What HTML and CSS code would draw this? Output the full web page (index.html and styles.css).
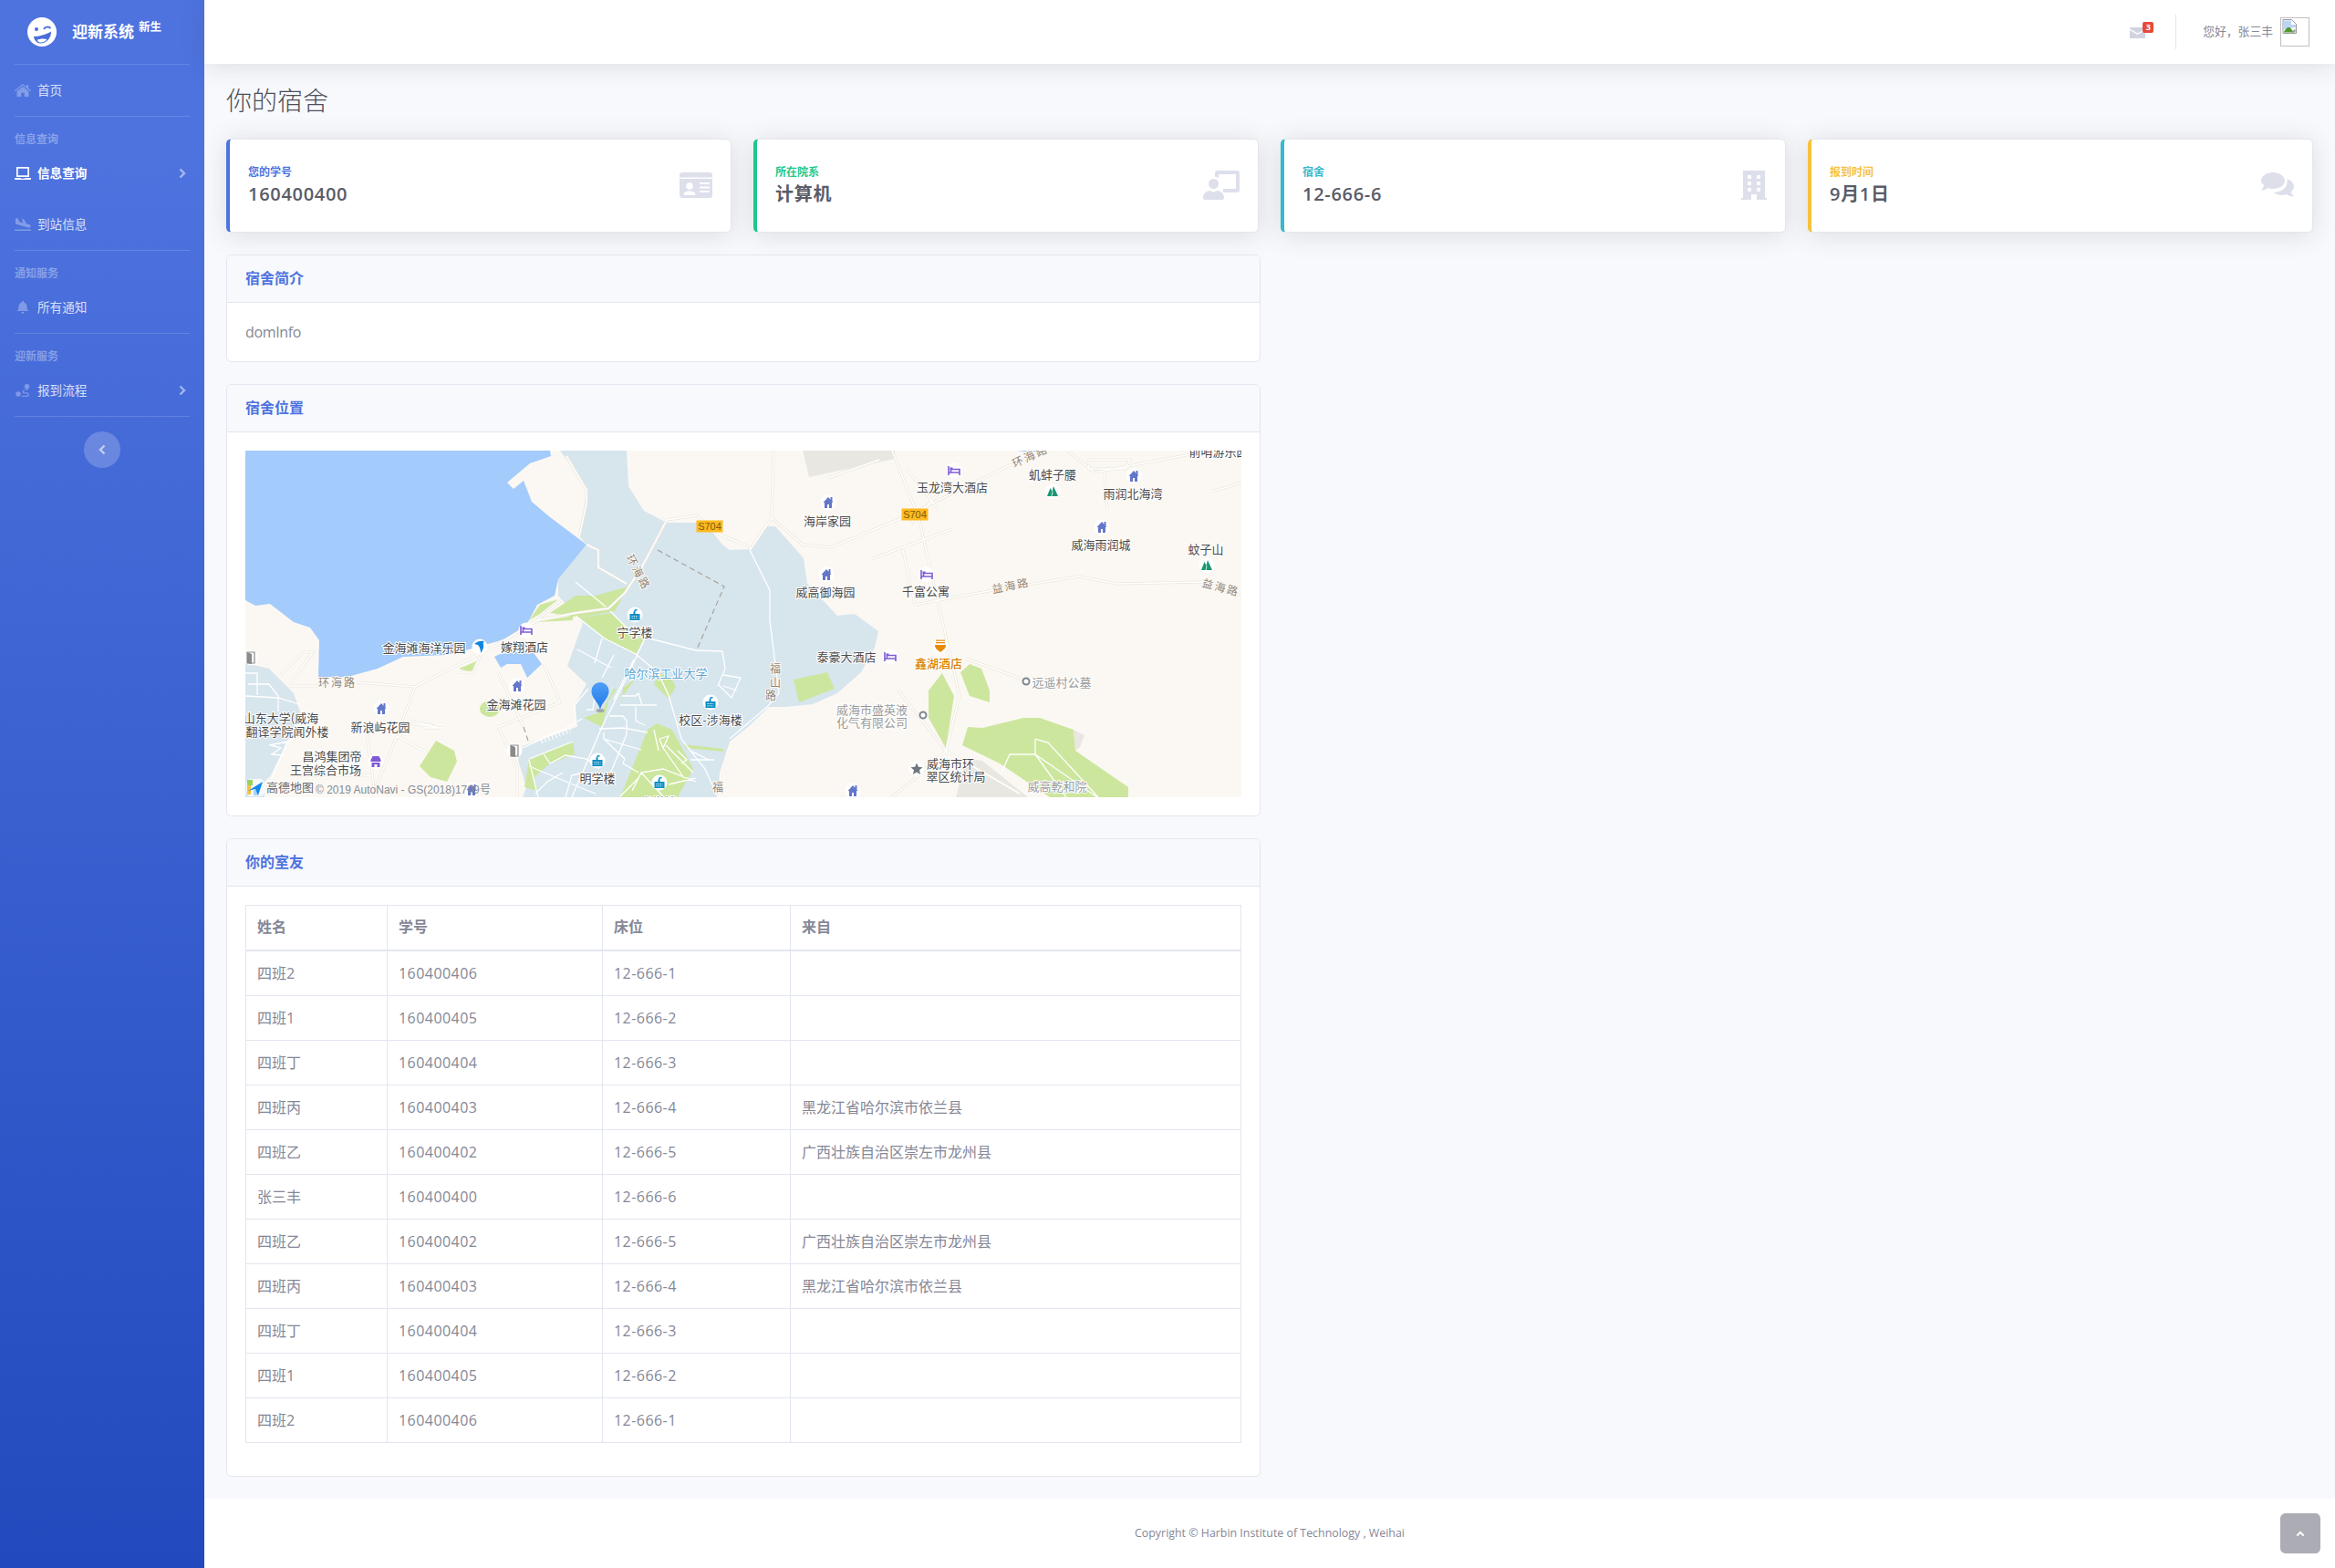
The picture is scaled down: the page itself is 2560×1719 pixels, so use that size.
FILE: index.html
```html
<!DOCTYPE html>
<html lang="zh-CN">
<head>
<meta charset="utf-8">
<title>你的宿舍</title>
<link rel="stylesheet" href="styles.css">
</head>
<body>
<svg class="defs" width="0" height="0" aria-hidden="true">
  <defs>
    <linearGradient id="pin-fill" x1="0" y1="0" x2="0" y2="1"><stop offset="0" stop-color="#4f9ff6"/><stop offset="1" stop-color="#1f78e6"/></linearGradient>
    <g id="m-bed"><circle r="8.5" fill="#fff"/><path d="M-6-5V5M-6 2H6V5M6 2V-1.5H-3.5V2" fill="none" stroke="#7f5bd5" stroke-width="1.6"/><rect x="-4.5" y="-3.5" width="3" height="2" fill="#7f5bd5"/></g>
    <g id="m-house"><circle r="8.5" fill="#fff"/><path d="M-5.5 0L0-6 2.5-3.3V-6H4.5V-1L5.5 0H4V6H1V2H-1V6H-4V0Z" fill="#6477c8"/></g>
    <g id="m-campus"><circle r="8.5" fill="#fff"/><path d="M-5.5 6V-1H-1.5V-3L0-6H2.5V-4.5H.5V-1H5.5V6Z" fill="#0a8fc4"/><path d="M-3.5 1.5H3.5M-3.5 3.8H3.5" stroke="#fff" stroke-width="1" stroke-dasharray="1.2 1"/></g>
    <g id="m-market"><circle r="8.5" fill="#fff"/><path d="M-3.5-6H3.5L5.5-2V0H-5.5V-2ZM-4.5 1H4.5V6H1.5V3H-1.5V6H-4.5Z" fill="#7f5bd5"/></g>
    <g id="m-dolphin"><circle r="8.5" fill="#fff"/><path d="M-6-3C-3-6 2-7 5-6L3.5-4C5-1 4 3 1 7 1 3 0 0-2-2-3-2.500-5-2.500-6-3Z" fill="#0a84e0"/></g>
    <g id="m-door"><circle r="8.5" fill="#fff"/><path d="M-4-6H4V6H-4Z" fill="none" stroke="#8a8a8a" stroke-width="1.200"/><path d="M-4-6L1-4V7L-4 6Z" fill="#8a8a8a"/></g>
    <g id="m-hill"><circle r="8.5" fill="#fff"/><path d="M-6 5L-2.500-4-.5 0 1-6 6 5Z" fill="#1a9670"/><path d="M-1 5L0 0" stroke="#fff" stroke-width=".8"/></g>
    <g id="m-bowl"><circle r="8.500" fill="#fff"/><path d="M-6-1H6C6 3 3 5 1.500 5.500V6.500H-1.500V5.500C-3 5-6 3-6-1ZM-5-6.500H5V-5.300H-5ZM-5-4H5V-2.800H-5Z" fill="#e88a00"/></g>
    <g id="m-ring"><circle r="3.500" fill="#fff" stroke="#7d8790" stroke-width="2"/></g>
    <g id="m-star"><circle r="8.500" fill="#fff"/><path d="M0-6.500L1.900-2.200 6.500-1.800 3 1.300 4 6 0 3.500-4 6-3 1.300-6.500-1.800-1.900-2.200Z" fill="#6f767d"/></g>
    <path id="roads-land" d="M552 105L520 92 495 71 462 76 450 99 434 129 416 156 398 173 362 178 320 186 276 213 186 259 121 254M81 258H49M374 103L387 109 387 128 418 146M352 6L374 43 374 58 366 94M186 259L166 313 143 369M133 309L141 369M166 313L199 331M178 296L203 301 196 304 216 304 179 299M49 356H136M39 246L63 221 74 221 49 256M277 303L345 276 327 233M277 243L305 303M277 303L298 346 298 380M234 243L250 243 258 224M315 190L345 165M709 0L738 73 783 269 768 329 738 356 709 380M579 0L577 74 611 103 642 106 720 74 842 14 881 0M901 0L931 24 1042 3M942 24L945 66M577 74L553 109M734 169L820 153 914 138 955 146 1049 144 1092 159M721 109L734 169M686 119L775 86M790 228L853 251M716 263L768 329M768 329L849 376M639 30L695 10M725 20L760 65M730 80L770 35M1092 35L1060 45M925 10L970 10 965 20 925 20Z"/>
    <path id="roads-campus" d="M362 144L395 171M400 176L430 206M362 181L394 206M394 206L428 223 452 243 464 268 478 316 488 329 504 349 518 380M443 206L494 219 523 220 526 239 518 258M364 218L401 238M383 233L391 206M404 224L391 249M438 206L418 249 391 303 358 380M426 229L404 273M376 261L361 279 363 303M383 271L381 284H374M411 279H451M413 269H428L431 266 435 279M428 281V296L438 301M399 291H414L418 296V311L398 359M388 305L414 304 441 309M393 309V316L434 328M393 316L416 338 414 343 431 353M304 326L354 303 369 294M311 338L359 319M311 339L321 380M311 346L371 371 384 376M326 331L334 343M318 376L331 363 348 353M334 343L351 334 374 338 388 349M351 380L358 356 371 353M524 246L543 249 533 271 518 256M539 263L524 258M488 329L508 339M488 339H514M448 306L453 329M454 316L464 313 458 326 454 316M461 323L491 353M458 326L481 359M474 329L484 339 478 343M424 373L434 353 458 349 494 363M464 366L494 359M434 353L458 379M411 379L431 359M553 109L575 153 575 186 585 266 572 281 531 316M0 244H13V268M3 256H26L36 269V286M0 269L36 271 59 278M26 323L51 318M28 323L39 326 29 333M28 333L43 334M29 359L46 319"/>
  </defs>
</svg>

<div class="wrapper">
  <aside class="sidebar">
    <a class="brand">
      <svg class="brand-logo" viewBox="0 0 32 32"><circle cx="16" cy="16" r="16" fill="#fff"/><path d="M7 21C12 21 21 19 26 15.500 26.500 23 20 29 14 28.500 10 28 7.500 25 7 21Z" fill="#4a6fdc"/><path d="M10.500 25C14 23 19 23 21.500 24.500 19 27 16 27.500 14 27.500 12.500 27.500 11.500 26 10.500 25Z" fill="#fff"/><circle cx="10" cy="13" r="2" fill="#4a6fdc"/><path d="M18 13C19.500 10 23.500 10 25.500 12" fill="none" stroke="#4a6fdc" stroke-width="2"/></svg>
      <span class="brand-name">迎新系统</span><span class="brand-sup">新生</span>
    </a>
    <hr class="side-hr flush">
    <a class="nav-link">
      <svg class="nav-ico" viewBox="0 0 18 14"><path d="M9 0L13 3.200V1.200H15V4.800L18 7.300 17.200 8.200 9 1.600 .8 8.200 0 7.300ZM9 3L15.500 8.200V14H10.700V9.700H7.300V14H2.500V8.200Z"/></svg>
      <span>首页</span>
    </a>
    <hr class="side-hr">
    <div class="side-heading">信息查询</div>
    <a class="nav-link active">
      <svg class="nav-ico" viewBox="0 0 18 14"><path d="M2 0H16V11H2ZM3.700 1.700V9.300H14.300V1.700ZM0 12H7V12.700H11V12H18V13C18 13.600 17.600 14 17 14H1C.4 14 0 13.600 0 13Z"/></svg>
      <span>信息查询</span>
      <svg class="nav-arrow" viewBox="0 0 8 12"><path d="M1.500 1.500L6 6 1.500 10.500" fill="none" stroke="currentColor" stroke-width="2.400"/></svg>
    </a>
    <a class="nav-link">
      <svg class="nav-ico" viewBox="0 0 18 14"><path d="M0 12.500H18V14H0ZM1.500 0L3.500 .6 5.500 4.300 9.300 5.400 8 .8 10.200 1.400 13.300 6.500 16.200 7.300C17.200 7.600 18 8.700 17.500 9.600 17.200 10.500 16.200 10.700 15 10.400L1 6.500V2Z"/></svg>
      <span>到站信息</span>
    </a>
    <hr class="side-hr">
    <div class="side-heading">通知服务</div>
    <a class="nav-link">
      <svg class="nav-ico" viewBox="0 0 18 14"><path d="M9 0C9.600 0 10 .4 10 1V1.500C12 2 13.500 3.800 13.500 6 13.500 9 14.500 10 15.300 11H2.700C3.500 10 4.500 9 4.500 6 4.500 3.800 6 2 8 1.500V1C8 .4 8.400 0 9 0ZM7.500 12H10.500C10.500 13 9.800 14 9 14S7.500 13 7.500 12Z"/></svg>
      <span>所有通知</span>
    </a>
    <hr class="side-hr">
    <div class="side-heading">迎新服务</div>
    <a class="nav-link">
      <svg class="nav-ico" viewBox="0 0 18 14"><circle cx="4" cy="11" r="2.800"/><path d="M13.500 0A2.800 2.800 0 0 1 16.300 2.800C16.300 4.500 13.500 7 13.500 7S10.700 4.500 10.700 2.800A2.800 2.800 0 0 1 13.500 0ZM8 14V12.700H13.500C14.700 12.700 14.700 10.500 13.500 10.500H10.500C8 10.500 8 6.500 10.500 6.500H11.500V7.800H10.500C9.700 7.800 9.700 9.200 10.500 9.200H13.500C16.500 9.200 16.500 14 13.500 14Z"/></svg>
      <span>报到流程</span>
      <svg class="nav-arrow" viewBox="0 0 8 12"><path d="M1.500 1.500L6 6 1.500 10.500" fill="none" stroke="currentColor" stroke-width="2.400"/></svg>
    </a>
    <hr class="side-hr">
    <div class="toggle-row">
      <button class="side-toggle" type="button"><svg viewBox="0 0 8 12"><path d="M6.500 1.500L2 6 6.500 10.500" fill="none" stroke="currentColor" stroke-width="2.400"/></svg></button>
    </div>
  </aside>

  <div class="content">
    <header class="topbar">
      <span class="mail">
        <svg class="mail-ico" viewBox="0 0 17 12"><path d="M1 0H16C16.500 0 17 .5 17 1V1.500L8.500 6.500 0 1.500V1C0 .5 .5 0 1 0ZM0 3L8.500 8 17 3V11C17 11.500 16.500 12 16 12H1C.5 12 0 11.500 0 11Z"/></svg>
        <span class="badge">3</span>
      </span>
      <span class="top-div"></span>
      <span class="user-name">您好，张三丰</span>
      <span class="avatar">
        <svg class="broken" viewBox="0 0 16 16"><path d="M1 .5H10.500L15.500 5.500V15.500H1Z" fill="#fff" stroke="#9a9a9a"/><path d="M2 1.500H10V6H15V9L2 11Z" fill="#bcd5f5"/><path d="M2 14.500C3 10 7 8 9 9.500L13 14.500Z" fill="#4f9a2d"/><path d="M10 14.500L14.500 10.500V14.500Z" fill="#9a9a9a"/></svg>
      </span>
    </header>

    <main class="main">
      <h1 class="page-title">你的宿舍</h1>

      <div class="stat-row">
        <div class="stat stat-primary">
          <div class="stat-text"><div class="stat-label">您的学号</div><div class="stat-value">160400400</div></div>
          <svg class="stat-ico" viewBox="0 0 36 28"><path d="M3 0H33C34.700 0 36 1.300 36 3V25C36 26.700 34.700 28 33 28H3C1.300 28 0 26.700 0 25V3C0 1.300 1.300 0 3 0Z"/><path d="M0 5.500H36V7H0Z" fill="#fff"/><circle cx="11" cy="15" r="3.800" fill="#fff"/><path d="M4.500 25C4.500 21.500 7 20.500 11 20.500S17.500 21.500 17.500 25Z" fill="#fff"/><path d="M22 12H33M22 16.500H33M22 21H33" stroke="#fff" stroke-width="2"/></svg>
        </div>
        <div class="stat stat-success">
          <div class="stat-text"><div class="stat-label">所在院系</div><div class="stat-value">计算机</div></div>
          <svg class="stat-ico wide" viewBox="0 0 40 32"><path d="M13 2.500C13 1.100 14.100 0 15.500 0H37.500C38.900 0 40 1.100 40 2.500V21.500C40 22.900 38.900 24 37.500 24H29V20H36V4H17V8C15.800 7.300 14.400 7 13 7Z"/><rect x="22" y="20" width="8" height="4"/><circle cx="11.500" cy="14.500" r="5.500"/><path d="M0 30C0 25 4 22 8 22L11.500 24 15 22C19 22 23 25 23 30 23 31 22 32 21 32H2C1 32 0 31 0 30Z"/></svg>
        </div>
        <div class="stat stat-info">
          <div class="stat-text"><div class="stat-label">宿舍</div><div class="stat-value">12-666-6</div></div>
          <svg class="stat-ico tall" viewBox="0 0 28 32"><path d="M2 0H26V30H28V32H0V30H2Z"/><path d="M7 5H11V9H7ZM17 5H21V9H17ZM7 12H11V16H7ZM17 12H21V16H17ZM7 19H11V23H7ZM17 19H21V23H17ZM11 26H17V32H11Z" fill="#fff"/></svg>
        </div>
        <div class="stat stat-warning">
          <div class="stat-text"><div class="stat-label">报到时间</div><div class="stat-value">9月1日</div></div>
          <svg class="stat-ico chat" viewBox="0 0 36 28"><path d="M13 0C20 0 26 4 26 9S20 18 13 18C11 18 9.300 17.700 7.700 17.100 6 18.400 3.500 19.500 .8 19.500 .4 19.500.2 19 .5 18.700 1.700 17.300 3 15.500 3.300 14.300 1.200 12.600 0 10.900 0 9 0 4 6 0 13 0Z"/><path d="M28.500 7.600C32.800 8.800 36 12 36 15.500 36 17.600 34.800 19.600 32.700 21.300 33 22.500 34.300 24.300 35.500 25.700 35.800 26 35.600 26.500 35.200 26.500 32.500 26.500 30 25.400 28.300 24.100 26.700 24.700 25 25 23 25 19.600 25 16.400 24 14 22.300 21.500 22 30 17 28.500 7.600Z"/></svg>
        </div>
      </div>

      <div class="left-col">
        <section class="panel">
          <h2 class="panel-head">宿舍简介</h2>
          <div class="panel-body dom-info">domInfo</div>
        </section>

        <section class="panel">
          <h2 class="panel-head">宿舍位置</h2>
          <div class="panel-body">
            <svg class="map" viewBox="0 0 1092 380" role="img" aria-label="宿舍位置地图">
              <rect width="1092" height="380" fill="#fbf8f3"/>
              <path fill="#d7e5ed" d="M345 0H418L420 39 437 66 462 79 495 79 512 89 523 103 531 109 555 108 572 83 581 83 612 118 616 146 649 181 668 179 694 198 690 216 675 243 649 266 622 278 591 281 574 281 551 303 531 319 520 353 518 380H304L308 369 299 339 304 324 363 303 361 279 374 256 353 236 370 189 362 181 343 159 343 141 374 103 366 94 374 46 362 23Z"/>
              <path fill="#d7e5ed" d="M0 233L26 239 53 266 61 289 46 319 28 356 21 363V380H0Z"/>
              <path fill="#a3cbfb" d="M0 0H334L335 6 312 14 287 35 294 42 305 33 314 56 334 73 374 103 343 141 339 159 320 169 311 186 302 199 277 209 241 219 220 224 173 226 145 239 112 248 80 248 81 208 71 194 53 188 27 168 11 170 0 164Z"/>
              <path fill="#a3cbfb" d="M279 223L314 219 325 234 309 249 302 234 287 234 280 238 273 226ZM846 0H875L861 2Z"/>
              <path fill="#cde69e" d="M334 178L362 159 384 159 420 149 405 176 366 183ZM394 206L430 206 437 206 428 223ZM366 183L402 178 430 206 394 206ZM311 186L323 169 343 163 323 179ZM320 188L359 181 359 186ZM234 239L253 231 248 243ZM191 346L209 318 229 329 232 341 221 363 203 358ZM371 293L391 286 404 261 407 261 398 275 391 303ZM413 279L413 270 428 250 414 260ZM448 256L454 244 467 250 472 259 464 272ZM411 380L441 306 451 299 468 306 491 349 474 380ZM311 339L359 319 361 333 334 343 316 359 321 373 306 369ZM601 251L638 243 646 261 607 276ZM749 263L764 244 777 269 768 326 749 293ZM784 243L794 234 807 239 816 263 816 276 794 269ZM786 323L792 303 808 304 853 293 871 293 908 306 910 329 968 369V380H882L827 343ZM481 322L524 327V330L483 326Z"/>
              <ellipse cx="268" cy="283" rx="11" ry="9" fill="#cde69e"/>
              <path fill="#e8e7e2" d="M611 0H712V9L618 29ZM779 380L790 338 808 340 858 380ZM908 306L920 312 915 325 910 329Z"/>
              <use href="#roads-land" class="road-edge"/>
              <use href="#roads-land" class="road-core"/>
              <use href="#roads-campus" class="road-white"/>
              <path d="M324 318L356 306" class="road-rungs"/>
              <path d="M866 316L866 333 934 380M866 316L880 320 935 380M829 353L838 333 866 333 900 380" class="road-white"/>
              <path d="M452 109L525 149 495 218M305 303L310 318" fill="none" stroke="#a9a39b" stroke-width="1.200" stroke-dasharray="6 4"/>

              <g transform="translate(0 -1)">
              <g class="road-name">
                <text x="101" y="254" letter-spacing="2">环海路</text>
                <text x="860" y="6" transform="rotate(-25 860 6)" letter-spacing="2">环海路</text>
                <text x="839" y="148" transform="rotate(-11 839 148)" letter-spacing="2">益海路</text>
                <text x="1070" y="150" transform="rotate(15 1070 150)" letter-spacing="2">益海路</text>
                <text x="432" y="134" transform="rotate(62 432 134)" letter-spacing="2">环海路</text>
                <text x="581" y="239">福</text>
                <text x="581" y="254">山</text>
                <text x="576" y="268">路</text>
                <text x="518" y="369">福</text>
              </g>
              </g>

              <rect x="494.500" y="76.500" width="29" height="13" fill="#ffba1f"/>
              <rect x="719.500" y="63.500" width="29" height="13" fill="#ffba1f"/>
              <g class="shield"><text x="509" y="83">S704</text><text x="734" y="70">S704</text></g>

              <use href="#m-bed" x="308" y="197"/><use href="#m-bed" x="777" y="22"/><use href="#m-bed" x="747" y="136"/><use href="#m-bed" x="707" y="226"/>
              <use href="#m-house" x="298" y="258"/><use href="#m-house" x="149" y="283"/><use href="#m-house" x="639" y="57"/><use href="#m-house" x="974" y="28"/><use href="#m-house" x="939" y="84"/><use href="#m-house" x="637" y="136"/><use href="#m-house" x="666" y="373"/>
              <use href="#m-campus" x="427" y="180"/><use href="#m-campus" x="510" y="276"/><use href="#m-campus" x="386" y="340"/><use href="#m-campus" x="454" y="364"/>
              <use href="#m-market" x="143" y="341"/><use href="#m-dolphin" x="257" y="215"/>
              <use href="#m-door" x="6" y="227"/><use href="#m-door" x="295" y="329"/>
              <use href="#m-hill" x="885" y="45"/><use href="#m-hill" x="1054" y="126"/>
              <use href="#m-bowl" x="762" y="214"/><use href="#m-ring" x="856" y="253"/><use href="#m-ring" x="743" y="290"/><use href="#m-star" x="736" y="349"/>
              <use href="#m-house" x="248" y="372"/>

              <g transform="translate(0 -1)">
              <g class="poi">
                <text x="196" y="216">金海滩海洋乐园</text><text x="306" y="215">嫁翔酒店</text><text x="427" y="199">宁学楼</text>
                <text x="297" y="278">金海滩花园</text><text x="510" y="295">校区-涉海楼</text><text x="148" y="303">新浪屿花园</text>
                <text x="39" y="293">山东大学(威海</text><text x="46" y="308">翻译学院闻外楼</text>
                <text x="95" y="335">昌鸿集团帝</text><text x="88" y="350">王宫综合市场</text><text x="386" y="359">明学楼</text><text x="453" y="385">书学楼</text>
                <text x="775" y="40">玉龙湾大酒店</text><text x="885" y="26">虮蚌子腰</text><text x="973" y="47">雨润北海湾</text>
                <text x="638" y="77">海岸家园</text><text x="938" y="103">威海雨润城</text><text x="1053" y="108">蚊子山</text>
                <text x="636" y="155">威高御海园</text><text x="746" y="154">千富公寓</text><text x="659" y="226">泰豪大酒店</text>
                <text x="773" y="343">威海市环</text><text x="779" y="357">翠区统计局</text><text x="1067" y="1">前哨游乐园</text>
              </g>
              <g class="poi poi-light">
                <text x="895" y="254">远遥村公墓</text><text x="687" y="284">威海市盛英液</text><text x="687" y="298">化气有限公司</text><text x="890" y="368">威高乾和院</text>
              </g>
              <text x="461" y="244" class="poi poi-campus">哈尔滨工业大学</text>
              <text x="760" y="233" class="poi poi-food">鑫湖酒店</text>
              </g>

              <g>
                <ellipse cx="389" cy="285" rx="4.500" ry="2" fill="#8a8f99" opacity=".7"/>
                <path d="M389 284C387.500 276 379.500 272 379.500 263.500A9.500 9.500 0 0 1 398.500 263.500C398.500 272 390.500 276 389 284Z" fill="url(#pin-fill)"/>
              </g>

              <rect x="1" y="360" width="20" height="19" rx="5" fill="#fff" opacity=".75"/>
              <path d="M2 361H8V367H2Z" fill="#9ad25c"/><path d="M2 367H6V377H2Z" fill="#f6c23e"/><path d="M9 372H14V378H9Z" fill="#a9d3f7"/>
              <path d="M19 363L14 378 11 371 3 373Z" fill="#1389ec"/>
              <text x="23" y="368" class="amap-name">高德地图</text>
              <text x="77" y="372" class="amap-copy">© 2019 AutoNavi - GS(2018)1709号</text>
            </svg>
          </div>
        </section>

        <section class="panel">
          <h2 class="panel-head">你的室友</h2>
          <div class="panel-body">
            <table class="mates">
              <colgroup><col class="c1"><col class="c2"><col class="c3"><col class="c4"></colgroup>
              <thead><tr><th>姓名</th><th>学号</th><th>床位</th><th>来自</th></tr></thead>
              <tbody>
                <tr><td>四班2</td><td class="num">160400406</td><td class="num">12-666-1</td><td></td></tr>
                <tr><td>四班1</td><td class="num">160400405</td><td class="num">12-666-2</td><td></td></tr>
                <tr><td>四班丁</td><td class="num">160400404</td><td class="num">12-666-3</td><td></td></tr>
                <tr><td>四班丙</td><td class="num">160400403</td><td class="num">12-666-4</td><td>黑龙江省哈尔滨市依兰县</td></tr>
                <tr><td>四班乙</td><td class="num">160400402</td><td class="num">12-666-5</td><td>广西壮族自治区崇左市龙州县</td></tr>
                <tr><td>张三丰</td><td class="num">160400400</td><td class="num">12-666-6</td><td></td></tr>
                <tr><td>四班乙</td><td class="num">160400402</td><td class="num">12-666-5</td><td>广西壮族自治区崇左市龙州县</td></tr>
                <tr><td>四班丙</td><td class="num">160400403</td><td class="num">12-666-4</td><td>黑龙江省哈尔滨市依兰县</td></tr>
                <tr><td>四班丁</td><td class="num">160400404</td><td class="num">12-666-3</td><td></td></tr>
                <tr><td>四班1</td><td class="num">160400405</td><td class="num">12-666-2</td><td></td></tr>
                <tr><td>四班2</td><td class="num">160400406</td><td class="num">12-666-1</td><td></td></tr>
              </tbody>
            </table>
          </div>
        </section>
      </div>
    </main>

    <footer class="footer">Copyright © Harbin Institute of Technology , Weihai</footer>
  </div>
</div>
<a class="scroll-top"><svg viewBox="0 0 12 8"><path d="M1.500 6.500L6 2 10.500 6.500" fill="none" stroke="currentColor" stroke-width="2.400"/></svg></a>
</body>
</html>
```
FILE: styles.css
```css
* { box-sizing: border-box; }
html, body { margin: 0; padding: 0; }
body {
  position: relative;
  min-height: 100vh;
  background: #f8f9fc;
  color: #858796;
  font: 400 16px/1.5 "Open Sans", "Noto Sans CJK SC", sans-serif;
}
.defs { position: absolute; }
.wrapper { display: flex; min-height: 100vh; }

/* sidebar */
.sidebar {
  flex: 0 0 224px;
  background: linear-gradient(180deg, #4e73df 10%, #224abe 100%);
  color: rgba(255, 255, 255, .8);
}
.brand { display: flex; align-items: center; height: 70px; padding-left: 30px; color: #fff; }
.brand-logo { width: 32px; height: 32px; }
.brand-name { margin-left: 17px; font-size: 17px; font-weight: 700; }
.brand-sup { margin: -9px 0 0 5px; font-size: 12.5px; font-weight: 700; }
.side-hr { height: 1px; margin: 0 16px 16px; border: 0; background: rgba(255, 255, 255, .15); }
.side-hr.flush { margin-bottom: 0; }
.side-hr:has(+ .nav-link) { margin-bottom: 0; }
.side-heading { height: 18px; padding: 0 16px; font-size: 12px; line-height: 18px; color: rgba(255, 255, 255, .35); font-weight: 700; }
.nav-link { display: flex; align-items: center; height: 56px; padding: 0 16px; font-size: 13.6px; color: rgba(255, 255, 255, .8); }
.nav-ico { flex: none; width: 18px; height: 14px; margin-right: 7px; fill: rgba(255, 255, 255, .3); }
.nav-arrow { flex: none; width: 8px; height: 12px; margin: 0 4px 0 auto; color: rgba(255, 255, 255, .5); }
.nav-link.active { color: #fff; font-weight: 700; }
.nav-link.active .nav-ico { fill: #fff; }
.toggle-row { display: flex; justify-content: center; }
.side-toggle { display: flex; align-items: center; justify-content: center; width: 40px; height: 40px; padding: 0; border: 0; border-radius: 50%; background: rgba(255, 255, 255, .2); color: rgba(255, 255, 255, .6); }
.side-toggle svg { width: 8px; height: 12px; }

/* topbar */
.content { flex: 1; min-width: 0; display: flex; flex-direction: column; }
.topbar {
  display: flex;
  align-items: center;
  height: 70px;
  padding-right: 28px;
  justify-content: flex-end;
  background: #fff;
  box-shadow: 0 2.4px 28px rgba(58, 59, 69, .15);
}
.mail { position: relative; display: block; width: 17px; height: 12px; margin: 1px 33px 0 0; }
.mail-ico { display: block; width: 17px; height: 12px; fill: #d1d3e2; }
.badge { position: absolute; left: 14px; top: -6px; width: 12px; height: 12px; border-radius: 2px; background: #e74a3b; color: #fff; font-size: 9px; font-weight: 700; line-height: 12px; text-align: center; }
.top-div { width: 1px; height: 38px; margin-right: 29px; background: #e3e6f0; }
.user-name { margin-right: 8px; font-size: 12.8px; color: #858796; }
.avatar { display: block; width: 32px; height: 32px; padding: 1px; border: 1px solid #c0c0c0; }
.broken { display: block; width: 16px; height: 16px; }

/* main */
.main { flex: 1; padding: 24px 24px 0; }
.page-title { margin: 0 0 24px; font-size: 28px; font-weight: 300; line-height: 32px; color: #4c4e5a; }
.stat-row { display: grid; grid-template-columns: repeat(4, 1fr); gap: 24px; margin: 25.600px 0 24px; }
.stat {
  display: flex;
  align-items: center;
  justify-content: space-between;
  height: 103px;
  padding: 0 20px;
  background: #fff;
  border: 1px solid #e3e6f0;
  border-left-width: 4px;
  border-radius: 5.6px;
  box-shadow: 0 2.4px 28px rgba(58, 59, 69, .15);
}
.stat-primary { border-left-color: #4e73df; }
.stat-success { border-left-color: #1cc88a; }
.stat-info { border-left-color: #36b9cc; }
.stat-warning { border-left-color: #f6c23e; }
.stat-text { padding-top: 2px; }
.stat-label { font-size: 12px; font-weight: 700; line-height: 18px; }
.stat-primary .stat-label { color: #4e73df; }
.stat-success .stat-label { color: #1cc88a; }
.stat-info .stat-label { color: #36b9cc; }
.stat-warning .stat-label { color: #f6c23e; }
.stat-value { font-size: 20px; font-weight: 600; line-height: 30px; color: #5a5c69; letter-spacing: .7px; }
.stat-ico { flex: none; width: 36px; height: 28px; fill: #dddfeb; }
.stat-ico.wide { width: 40px; height: 32px; }
.stat-ico.tall { width: 28px; height: 32px; }
.stat-ico.chat { width: 36px; height: 28px; }

.left-col { width: 1134px; }
.panel { margin-bottom: 24px; background: #fff; border: 1px solid #e3e6f0; border-radius: 5.6px; overflow: hidden; }
.panel-head { margin: 0; padding: 12px 20px; height: 52px; background: #f8f9fc; border-bottom: 1px solid #e3e6f0; font-size: 16px; font-weight: 700; line-height: 26px; color: #4e73df; }
.panel-body { padding: 20px; }
.dom-info { letter-spacing: -.35px; }
.map { display: block; width: 100%; height: 380px; }

/* map labels */
.map text { text-anchor: middle; dominant-baseline: central; font-family: "Noto Sans CJK SC", sans-serif; }
.poi, .poi text { font-size: 13px; fill: #4a4a4a; stroke: #fff; stroke-width: 2px; paint-order: stroke; }
.poi-light text { fill: #9a9a9a; }
.map .poi-campus { fill: #5ba3cf; }
.map .poi-food { fill: #d87f00; font-weight: 500; }
.road-name text { font-size: 12px; fill: #93877a; stroke: #fbf8f3; stroke-width: 2px; paint-order: stroke; }
.shield text { font-size: 11px; fill: #7a5a10; font-family: "Liberation Sans", sans-serif; }
.road-edge { fill: none; stroke: #ece7db; stroke-width: 3; }
.road-core { fill: none; stroke: #fff; stroke-width: 1.500; }
.road-white { fill: none; stroke: #fff; stroke-width: 1.300; }
.road-rungs { fill: none; stroke: #fff; stroke-width: 7; stroke-dasharray: 1.200 3; }
.map .amap-name { text-anchor: start; font-size: 13px; fill: #666; stroke: #fff; stroke-width: 2px; paint-order: stroke; }
.map .amap-copy { text-anchor: start; font-family: "Liberation Sans", sans-serif; font-size: 12px; fill: #858c96; }

/* table */
.mates { width: 100%; margin-bottom: 16px; border-collapse: collapse; table-layout: fixed; font-size: 16px; }
.c1 { width: 155px; }
.c2 { width: 236px; }
.c3 { width: 206px; }
.mates th, .mates td { height: 49px; padding: 0 12px; border: 1px solid #e3e6f0; text-align: left; vertical-align: middle; color: #858796; font-weight: 400; }
.mates th { height: 50px; padding-bottom: 2px; border-bottom-width: 2px; font-weight: 700; }
.num { letter-spacing: .45px; }

.footer { flex: none; height: 76px; background: #fff; font-size: 12.4px; line-height: 76px; text-align: center; color: #858796; }
.scroll-top { position: absolute; right: 16px; bottom: 16px; display: flex; align-items: center; justify-content: center; width: 44px; height: 44px; border-radius: 5.6px; background: rgba(90, 92, 105, .5); color: #fff; }
.scroll-top svg { width: 10px; height: 7px; }
```
